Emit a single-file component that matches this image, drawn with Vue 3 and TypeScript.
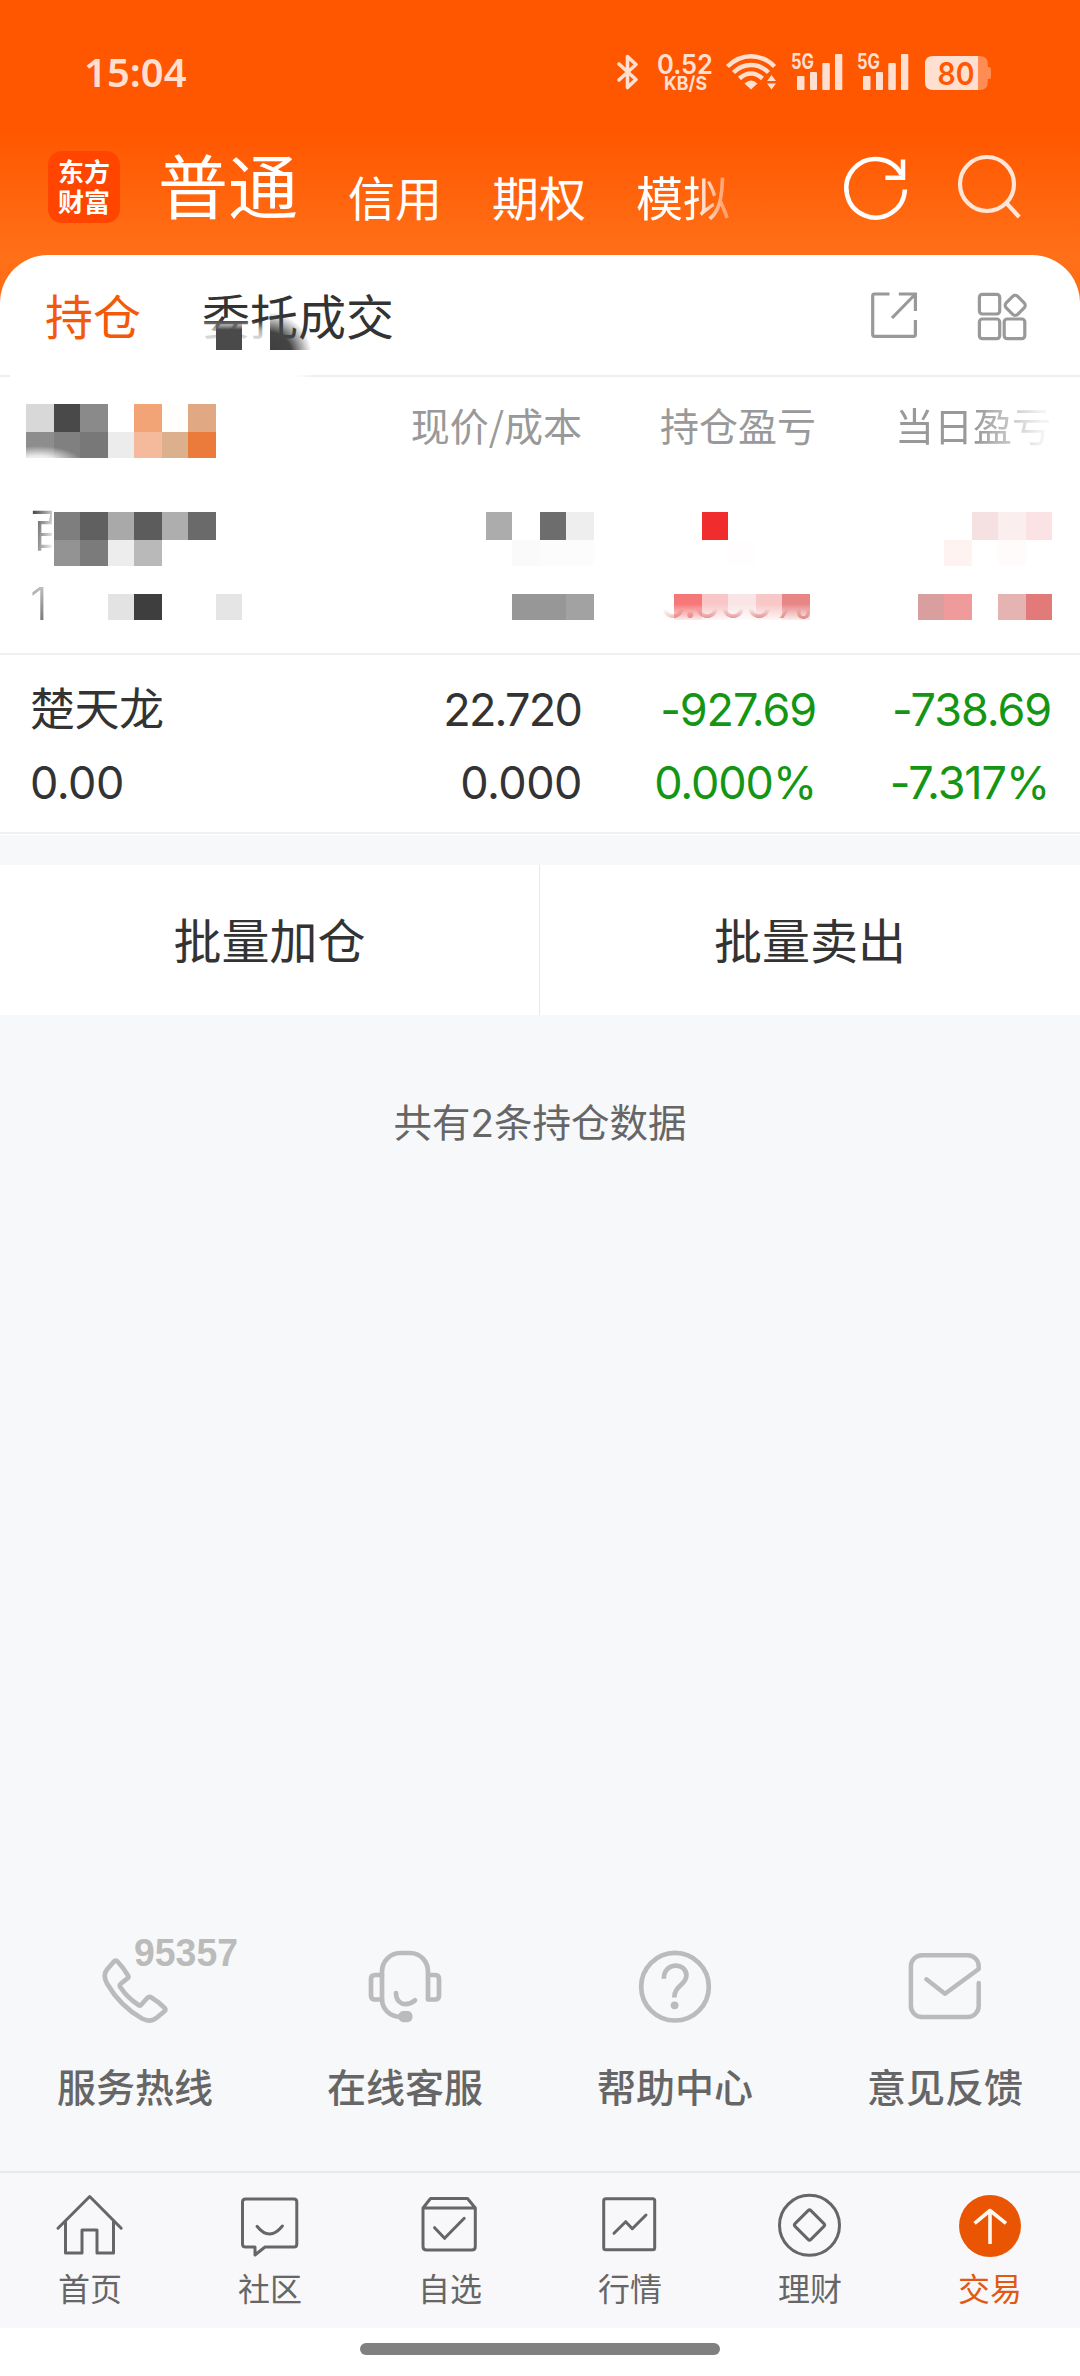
<script setup lang="ts">
interface Cell { x: number; y: number; w: number; h: number; c: string }

const accounts = ['信用', '期权', '模拟']

const cell = (x: number, x2: number, y: number, y2: number, c: string): Cell => ({ x, y, w: x2 - x, h: y2 - y, c })

// Privacy mosaic covering the account filter and the first position
const mosaic: Cell[] = [
  cell(26, 54, 404, 432, '#d8d8d8'), cell(54, 80, 404, 432, '#494949'), cell(80, 108, 404, 432, '#8a8a8a'),
  cell(134, 162, 404, 432, '#f2a477'), cell(162, 188, 404, 432, '#fffefb'), cell(188, 216, 404, 432, '#e0a983'),
  cell(26, 54, 432, 458, '#8d8d8d'), cell(54, 80, 432, 458, '#808080'), cell(80, 108, 432, 458, '#787878'),
  cell(108, 134, 432, 458, '#ececec'), cell(134, 162, 432, 458, '#f5b99c'), cell(162, 188, 432, 458, '#dcb08d'),
  cell(188, 216, 432, 458, '#ea7b3a'),
  cell(54, 80, 512, 540, '#7e7e7e'), cell(80, 108, 512, 540, '#606060'), cell(108, 134, 512, 540, '#a9a9a9'),
  cell(134, 162, 512, 540, '#5c5c5c'), cell(162, 188, 512, 540, '#aeaeae'), cell(188, 216, 512, 540, '#6a6a6a'),
  cell(54, 80, 540, 566, '#939393'), cell(80, 108, 540, 566, '#7b7b7b'), cell(108, 134, 540, 566, '#ededed'),
  cell(134, 162, 540, 566, '#b9b9b9'),
  cell(108, 134, 594, 620, '#e3e3e3'), cell(134, 162, 594, 620, '#3e3e3e'), cell(216, 242, 594, 620, '#e5e5e5'),
  cell(486, 512, 512, 540, '#acacac'), cell(540, 566, 512, 540, '#6d6d6d'), cell(566, 594, 512, 540, '#eeeeee'),
  cell(512, 540, 540, 566, '#fafafa'), cell(540, 594, 540, 566, '#fcfcfc'),
  cell(512, 566, 594, 620, '#979797'), cell(566, 594, 594, 620, '#a2a2a2'),
  cell(702, 728, 512, 540, '#f02c2c'), cell(728, 757, 540, 566, '#fffdfd'),
  cell(674, 702, 594, 620, '#f57778'), cell(702, 728, 594, 620, '#f9c7c7'), cell(728, 756, 594, 620, '#f9e5e5'),
  cell(756, 782, 594, 620, '#f8c7c7'), cell(782, 810, 594, 620, '#e88686'),
  cell(972, 998, 512, 540, '#f5e1e1'), cell(998, 1026, 512, 540, '#fbeeee'), cell(1026, 1052, 512, 540, '#fbe3e5'),
  cell(944, 972, 540, 566, '#fff3f2'), cell(998, 1026, 540, 566, '#fffbfa'),
  cell(918, 944, 594, 620, '#d99e9e'), cell(944, 972, 594, 620, '#ef9b9c'),
  cell(998, 1026, 594, 620, '#e6b3b3'), cell(1026, 1052, 594, 620, '#e27a79'),
]
</script>

<template>
  <div class="page">
    <header class="top">
      <div class="status">
        <span class="time">15:04</span>
        <svg class="bt" width="22" height="44" viewBox="0 0 22 44" fill="none" stroke="#ffdfd0" stroke-width="3.6" stroke-linejoin="round" stroke-linecap="round">
          <path d="M2 14 L19 29.5 L10.5 37.5 V6.5 L19 14.5 L2 30" />
        </svg>
        <svg class="speed" width="56" height="44" viewBox="0 0 56 44" fill="#ffdfd0">
          <text x="0" y="23.500" font-size="27" font-weight="600" textLength="56" lengthAdjust="spacingAndGlyphs">0.52</text>
          <text x="7" y="40" font-size="19" font-weight="700" textLength="43" lengthAdjust="spacingAndGlyphs">KB/S</text>
        </svg>
        <svg class="wifi" width="50" height="44" viewBox="0 0 50 44" fill="none" stroke="#ffdfd0" stroke-width="4.400">
          <path d="M1.500 16.500 Q12 6.200 25 6.200 Q38 6.200 48.500 16.500" />
          <path d="M7.500 22.500 Q15 15 25 15 Q35 15 42.500 22.500" />
          <path d="M13.500 28.500 Q19 23.500 25 23.500 Q31 23.500 36.500 28.500" />
          <path d="M18.500 33.500 Q25 27.500 31.500 33.500 L25 39.500 Z" fill="#ffdfd0" stroke="none" />
          <path d="M41 31 L45.500 25 L50 31 Z M41 33.500 H50 L45.500 39.500 Z" fill="#ffdfd0" stroke="none" />
        </svg>
        <svg v-for="n in 2" :key="n" class="signal" width="52" height="44" viewBox="0 0 52 44" fill="#ffdfd0">
          <text x="0" y="18.500" font-size="21" font-weight="700" textLength="23" lengthAdjust="spacingAndGlyphs">5G</text>
          <rect x="6" y="26" width="7.500" height="14" rx="1" />
          <rect x="19" y="22" width="7" height="18" rx="1" />
          <rect x="31.300" y="13" width="7.500" height="27" rx="1" />
          <rect x="44" y="4" width="7.300" height="36" rx="1" />
        </svg>
        <svg class="battery" width="67" height="44" viewBox="0 0 67 44">
          <path d="M53 6 H54.500 Q62.800 6 62.800 14 V17 H64 Q66 17 66 19 V27 Q66 29 64 29 H62.800 V32 Q62.800 40 54.500 40 H53 Z" fill="#ff8c52" />
          <path d="M8 6 H53 V40 H8 Q0 40 0 32 V14 Q0 6 8 6 Z" fill="#ffdfd0" />
          <text x="12.500" y="34.800" font-size="31" font-weight="600" textLength="37" lengthAdjust="spacingAndGlyphs" fill="#ff5800">80</text>
        </svg>
      </div>

      <div class="titlebar">
        <div class="logo"><span>东方</span><span>财富</span></div>
        <span class="current">普通</span>
        <nav class="accounts">
          <span v-for="a in accounts" :key="a">{{ a }}</span>
        </nav>
        <svg class="reload" width="72" height="72" viewBox="0 0 72 72" fill="none" stroke="#fff" stroke-width="4.500">
          <path d="M64.900 37.500 A29.300 29.300 0 1 1 61.500 22.500" />
          <path d="M63 7.500 V25.700 H45.400" />
        </svg>
        <svg class="search" width="72" height="72" viewBox="0 0 72 72" fill="none" stroke="#ffe6d8" stroke-width="4.200">
          <circle cx="35" cy="36" r="27" />
          <path d="M54 54.700 L67.200 69" />
        </svg>
      </div>
    </header>

    <main class="card">
      <div class="tabs">
        <span class="tab active">持仓</span>
        <span class="tab">委托成交</span>
        <svg class="share" width="50" height="50" viewBox="0 0 50 50" fill="none" stroke="#999" stroke-width="3.200">
          <path d="M20.500 4 H5.500 Q3.700 4 3.700 5.800 V44.500 Q3.700 46.300 5.500 46.300 H44.600 Q46.400 46.300 46.400 44.500 V30" />
          <path d="M29.800 4 H46.400 V21 M46 4.500 L23 28" />
        </svg>
        <svg class="apps" width="50" height="50" viewBox="0 0 50 50" fill="none" stroke="#999" stroke-width="3.200">
          <rect x="2.400" y="3.300" width="20.300" height="19.700" rx="3" />
          <rect x="2.400" y="28" width="20.300" height="19.700" rx="3" />
          <rect x="27.200" y="28" width="20.600" height="19.700" rx="3" />
          <rect x="30.100" y="6.200" width="16.200" height="16.200" rx="3.500" transform="rotate(45 38.200 14.300)" />
        </svg>
      </div>

      <div class="row head">
        <span></span><span>现价/成本</span><span>持仓盈亏</span><span class="fading">当日盈亏</span>
      </div>

      <div class="row position">
        <div><p class="cut">百</p><p class="dim">1</p></div>
      </div>

      <div class="row position">
        <div><p>楚天龙</p><p>0.00</p></div>
        <div><p class="price">22.720</p><p>0.000</p></div>
        <div class="down"><p>-927.69</p><p>0.000%</p></div>
        <div class="down"><p>-738.69</p><p class="pct">-7.317%</p></div>
      </div>

      <svg class="mosaic" width="1080" height="400" viewBox="0 255 1080 400">
        <defs>
          <linearGradient id="hazeDown" x1="0" y1="0" x2="0" y2="1">
            <stop offset="0" stop-color="#fff" stop-opacity="0" />
            <stop offset="1" stop-color="#fff" stop-opacity="0.850" />
          </linearGradient>
          <linearGradient id="hazeUp" x1="0" y1="0" x2="0" y2="1">
            <stop offset="0" stop-color="#fff" stop-opacity="0" />
            <stop offset="0.450" stop-color="#fff" stop-opacity="0.600" />
            <stop offset="1" stop-color="#fff" stop-opacity="0.900" />
          </linearGradient>
          <radialGradient id="hazeCorner">
            <stop offset="0" stop-color="#fff" />
            <stop offset="0.400" stop-color="#fff" stop-opacity="0.800" />
            <stop offset="1" stop-color="#fff" stop-opacity="0" />
          </radialGradient>
          <radialGradient id="blot" gradientUnits="userSpaceOnUse" cx="268" cy="356" r="44">
            <stop offset="0" stop-color="#3e3e3e" />
            <stop offset="0.550" stop-color="#444" />
            <stop offset="1" stop-color="#555" stop-opacity="0" />
          </radialGradient>
          <linearGradient id="blotTop" x1="0" y1="0" x2="0" y2="1">
            <stop offset="0" stop-color="#4a4a4a" stop-opacity="0" />
            <stop offset="0.300" stop-color="#4a4a4a" />
          </linearGradient>
          <linearGradient id="remnant" x1="0" y1="0" x2="0" y2="1">
            <stop offset="0.640" stop-color="#c83c3c" stop-opacity="0" />
            <stop offset="0.850" stop-color="#cf4444" stop-opacity="0.650" />
          </linearGradient>
          <linearGradient id="remnantFade" x1="0" y1="0" x2="1" y2="0">
            <stop offset="0" stop-color="#fff" stop-opacity="0.900" />
            <stop offset="1" stop-color="#fff" stop-opacity="0.300" />
          </linearGradient>
          <linearGradient id="lineFade" x1="0" y1="0" x2="1" y2="0">
            <stop offset="0" stop-color="#fff" />
            <stop offset="0.930" stop-color="#fff" />
            <stop offset="1" stop-color="#fff" stop-opacity="0" />
          </linearGradient>
        </defs>
        <rect x="10" y="374" width="305" height="4" fill="url(#lineFade)" />
        <rect x="203" y="319" width="46" height="22" fill="url(#hazeUp)" />
        <rect x="250" y="321" width="20" height="20" fill="url(#hazeUp)" />
        <rect x="216" y="321" width="26" height="29" fill="url(#blotTop)" />
        <rect x="270" y="312" width="44" height="38" fill="url(#blot)" />
        <rect v-for="(m, i) in mosaic" :key="i" :x="m.x" :y="m.y" :width="m.w" :height="m.h" :fill="m.c" shape-rendering="crispEdges" />
        <ellipse cx="38" cy="462" rx="44" ry="16" fill="url(#hazeCorner)" />
        <rect x="674" y="604" width="136" height="16" fill="url(#hazeDown)" />
        <text x="659" y="617.500" font-size="45" textLength="156" fill="url(#remnant)">0.000%</text>
        <rect x="650" y="594" width="24" height="28" fill="url(#remnantFade)" />
      </svg>
    </main>

    <div class="batch">
      <button type="button">批量加仓</button>
      <button type="button">批量卖出</button>
    </div>

    <p class="count">共有<b>2</b>条持仓数据</p>

    <section class="services">
      <div class="service">
        <svg width="108" height="108" viewBox="0 0 108 108" fill="none" stroke="#bbb" stroke-width="4.700" stroke-linejoin="round" stroke-linecap="round">
          <path d="M33 29.500 Q34.500 27.500 36.500 29.500 Q43 36.500 47 43.500 Q48 45 46.700 46.200 L39.500 52 Q38.300 53.300 39.300 55 Q46 65.500 57.500 73 Q59 74.200 60.200 72.800 L66.500 65.800 Q68 64.300 70 65.200 Q78 70 83.800 76.200 Q85 77.800 83.500 79.300 L76 85.500 Q69.500 91 61 86.500 Q39 74 26 51.500 Q21.500 43.500 26 37.500 Z" />
          <text x="53" y="34" font-size="39" font-weight="700" textLength="104" lengthAdjust="spacingAndGlyphs" fill="#bbb" stroke="none" class="hotline">95357</text>
        </svg>
        <span>服务热线</span>
      </div>
      <div class="service">
        <svg width="108" height="108" viewBox="0 0 108 108" fill="none" stroke="#bbb" stroke-width="4.700" stroke-linejoin="round" stroke-linecap="round">
          <path d="M49 84.700 C39 84.700 31 77 31 67 V39.700 C31 29 39.500 21 49 21 H59 C69 21 77 29 77 39.700 V67.500 H84 Q88 67.500 88 63.500 V47 Q88 43 84 43 H78" />
          <path d="M31 43 H24 Q20 43 20 47 V63.500 Q20 67.500 24 67.500 H31" />
          <path d="M45 61 C45 71 54 76 64 68.300" />
          <rect x="47.400" y="79" width="14.100" height="11.300" rx="5" fill="#bbb" stroke="none" />
        </svg>
        <span>在线客服</span>
      </div>
      <div class="service">
        <svg width="108" height="108" viewBox="0 0 108 108" fill="none" stroke="#bbb" stroke-width="4.700">
          <circle cx="54" cy="54.700" r="33.800" />
          <path d="M42.800 46.700 C42.800 29.500 65.400 30 65.400 43.500 C65.400 53 53.300 53.500 53.300 65.500" />
          <circle cx="53.600" cy="73.300" r="3.900" fill="#bbb" stroke="none" />
        </svg>
        <span>帮助中心</span>
      </div>
      <div class="service">
        <svg width="108" height="108" viewBox="0 0 108 108" fill="none" stroke="#bbb" stroke-width="4.500" stroke-linejoin="round" stroke-linecap="round">
          <path d="M87.700 51 V74 A11 11 0 0 1 76.700 85 H30.900 A11 11 0 0 1 19.900 74 V34.300 A11 11 0 0 1 30.900 23.300 H76.700 A11 11 0 0 1 87.700 34.300 V37 L54 61.700 L35.400 47.300" />
        </svg>
        <span>意见反馈</span>
      </div>
    </section>

    <nav class="tabbar">
      <div class="item">
        <svg width="72" height="72" viewBox="0 0 72 72">
          <path d="M4 39.200 L35.700 7.500 L67.200 39.200" />
          <path d="M11.500 32 V64 H28 V41 H43 V64 H59.500 V32" />
        </svg>
        <span>首页</span>
      </div>
      <div class="item">
        <svg width="72" height="72" viewBox="0 0 72 72">
          <path d="M11.500 10 H60 Q62.800 10 62.800 13 V55 Q62.800 58 60 58 H31 L21 66 V58 H11.500 Q8.500 58 8.500 55 V13 Q8.500 10 11.500 10 Z" />
          <path d="M23 37.300 Q35.500 53 48.400 37" />
        </svg>
        <span>社区</span>
      </div>
      <div class="item">
        <svg width="72" height="72" viewBox="0 0 72 72">
          <path d="M9 19 L16.500 9.500 H53.500 L61.300 19 V57.500 Q61.300 61 58 61 H12.500 Q9 61 9 57.500 Z M9 19 H61.300" />
          <path d="M20.600 38.700 L30.600 49.300 L50.200 29.300" />
        </svg>
        <span>自选</span>
      </div>
      <div class="item">
        <svg width="72" height="72" viewBox="0 0 72 72">
          <rect x="9.700" y="9.700" width="51" height="51" rx="2" />
          <path d="M20 44.300 L31.700 32.700 L38.300 39.700 L52 26" />
        </svg>
        <span>行情</span>
      </div>
      <div class="item">
        <svg width="72" height="72" viewBox="0 0 72 72">
          <circle cx="35.500" cy="36.300" r="30" />
          <rect x="24.300" y="24.800" width="22.400" height="22.400" rx="2" transform="rotate(45 35.500 36)" />
        </svg>
        <span>理财</span>
      </div>
      <div class="item on">
        <svg width="72" height="72" viewBox="0 0 72 72">
          <circle cx="36" cy="37" r="31" fill="#ea5504" stroke="none" />
          <path d="M36 21.500 V55 M20.600 34.300 L36 21.500 L52 34.300" stroke="#fff8f0" stroke-width="3.600" stroke-linecap="butt" />
        </svg>
        <span>交易</span>
      </div>
    </nav>

    <footer class="home"><i></i></footer>
  </div>
</template>

<style>
body {
  margin: 0;
}
</style>

<style scoped>
.page {
  display: flex;
  flex-direction: column;
  width: 1080px;
  height: 2376px;
  overflow: hidden;
  background: #f7f8fa;
  color: #333;
  font-family: "Noto Sans CJK SC", sans-serif;
}

p {
  margin: 0;
}

svg {
  display: block;
  flex: none;
}

svg text {
  font-family: Inter, sans-serif;
}

svg .hotline {
  font-family: "Liberation Sans", sans-serif;
}

.top {
  flex: none;
  height: 305px;
  background: linear-gradient(#ff5700 0, #ff5700 130px, #ff7018 255px, #ff6c15 305px);
}

.status {
  display: flex;
  height: 94px;
  padding: 50px 0 0 84px;
  box-sizing: border-box;
}

.status svg {
  overflow: visible;
}

.time {
  width: 533px;
  color: #ffdfd0;
  font: 600 40px/43px "Noto Sans", sans-serif;
}

.speed {
  margin-left: 18px;
}

.wifi {
  margin-left: 13px;
}

.signal {
  margin-left: 14px;
}

.wifi + .signal {
  margin-left: 15px;
}

.battery {
  margin-left: 16px;
}

.titlebar {
  display: flex;
  height: 152px;
  padding: 0 56px 0 48px;
  color: #fff;
}

.logo {
  display: flex;
  flex: none;
  flex-direction: column;
  align-items: center;
  width: 72px;
  height: 72px;
  margin-top: 57px;
  padding-top: 5px;
  box-sizing: border-box;
  border-radius: 14px;
  background: #ff4500;
  font-size: 26px;
  font-weight: 700;
  line-height: 30px;
}

.current {
  width: 142px;
  margin: 44px 0 0 38px;
  font-size: 70px;
  line-height: 92px;
  white-space: nowrap;
}

.accounts {
  display: flex;
  gap: 50px;
  width: 440px;
  margin: 59px 0 0 48px;
  font-size: 47px;
  line-height: 86px;
}

.accounts span:last-child {
  -webkit-mask-image: linear-gradient(90deg, #000 60%, rgba(0, 0, 0, 0.3));
  mask-image: linear-gradient(90deg, #000 60%, rgba(0, 0, 0, 0.3));
}

.reload {
  margin: 58px 0 0 52px;
}

.search {
  margin: 54px 0 0 40px;
}

.card {
  position: relative;
  flex: none;
  height: 580px;
  margin-top: -50px;
  border-radius: 48px 48px 0 0;
  background: #fff;
}

.tabs {
  display: flex;
  align-items: flex-start;
  height: 122px;
  padding-left: 45px;
  box-sizing: border-box;
  border-bottom: 2px solid #eee;
}

.tab {
  margin-top: 19px;
  font-size: 48px;
  line-height: 80px;
}

.tab + .tab {
  width: 666px;
  margin-left: 61px;
}

.tab.active {
  color: #f25a0a;
}

.share {
  margin-top: 35px;
  margin-left: 1px;
}

.apps {
  margin-top: 36px;
  margin-left: 58px;
}

.row {
  display: grid;
  grid-template-columns: 300px 282px 234px 235px;
  text-align: right;
}

.head {
  height: 99px;
  color: #999;
  font-size: 39px;
  line-height: 94px;
}

.head .fading {
  -webkit-mask-image: linear-gradient(90deg, #000 68%, rgba(0, 0, 0, 0.12) 96%);
  mask-image: linear-gradient(90deg, #000 68%, rgba(0, 0, 0, 0.12) 96%);
}

.position {
  height: 179px;
  padding-top: 18px;
  box-sizing: border-box;
  border-bottom: 2px solid #f0f0f0;
  font-family: Inter, "Noto Sans CJK SC", sans-serif;
  font-size: 45px;
  line-height: 73px;
}

.position > div:first-child {
  padding-left: 30px;
  text-align: left;
}

.position p {
  letter-spacing: -0.500px;
}

.position .price {
  padding-right: 1px;
  letter-spacing: -1.800px;
}

.position .down {
  color: #149614;
}

.position .down p {
  letter-spacing: -1.100px;
}

.position .down .pct {
  padding-right: 2px;
}

.cut {
  width: 22px;
  overflow: hidden;
  -webkit-mask-image: linear-gradient(100deg, #000 10%, transparent 95%);
  mask-image: linear-gradient(100deg, #000 10%, transparent 95%);
}

.dim {
  width: 22px;
  color: #777;
  font-weight: 300;
  -webkit-mask-image: linear-gradient(rgba(0, 0, 0, 0.4) 20%, #000 75%);
  mask-image: linear-gradient(rgba(0, 0, 0, 0.4) 20%, #000 75%);
}

.mosaic {
  position: absolute;
  top: 0;
  left: 0;
}

.batch {
  display: grid;
  flex: none;
  grid-template-columns: 540px 540px;
  height: 150px;
  margin-top: 30px;
  background: #fff;
}

.batch button {
  padding: 0 0 4px;
  border: 0;
  background: none;
  color: #333;
  font: 400 48px/60px "Noto Sans CJK SC", sans-serif;
}

.batch button:first-child {
  border-right: 1px solid #e8e8e8;
}

.count {
  flex: none;
  margin-top: 75px;
  color: #666;
  font-size: 38.500px;
  line-height: 60px;
  text-align: center;
}

.count b {
  font-family: Inter, sans-serif;
  font-weight: 400;
}

.services {
  display: grid;
  flex: none;
  grid-template-columns: repeat(4, 270px);
  height: 239px;
  margin-top: auto;
}

.service {
  display: flex;
  flex-direction: column;
  align-items: center;
}

.service svg {
  overflow: visible;
}

.service span {
  margin-top: 15px;
  color: #666;
  font-size: 39px;
  font-weight: 500;
  line-height: 60px;
}

.tabbar {
  display: grid;
  flex: none;
  grid-template-columns: repeat(6, 180px);
  height: 157px;
  box-sizing: border-box;
  border-top: 2px solid #e8e9ea;
  background: #f8f8fa;
}

.item {
  display: flex;
  flex-direction: column;
  align-items: center;
  padding-top: 16px;
  color: #666;
}

.item svg {
  fill: none;
  stroke: #666;
  stroke-width: 3;
  stroke-linejoin: round;
  stroke-linecap: round;
}

.item span {
  margin-top: 2px;
  font-size: 32px;
  line-height: 48px;
}

.item.on {
  color: #e05a14;
}

.home {
  flex: none;
  height: 48px;
  background: #fff;
}

.home i {
  display: block;
  width: 360px;
  height: 12px;
  margin: 15px auto 0;
  border-radius: 6px;
  background: #808080;
}
</style>
